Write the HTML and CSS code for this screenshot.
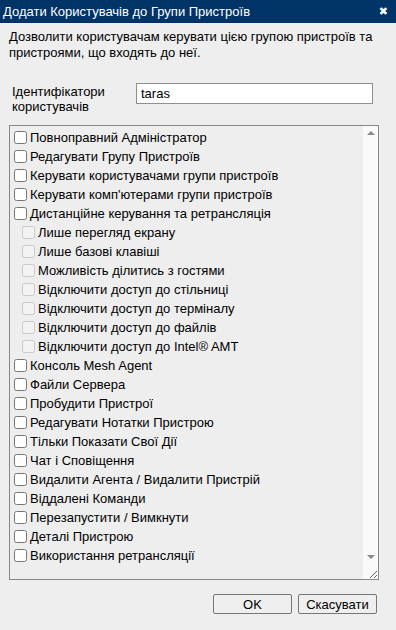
FILE: index.html
```html
<!DOCTYPE html>
<html lang="uk">
<head>
<meta charset="utf-8">
<link rel="stylesheet" href="styles.css">
</head>
<body>
<div class="dialog">
  <div class="titlebar">
    <span class="title">Додати Користувачів до Групи Пристроїв</span>
    <span class="close">&#x2716;</span>
  </div>
  <div class="content">
    <p class="desc">Дозволити користувачам керувати цією групою пристроїв та пристроями, що входять до неї.</p>
    <div class="idrow">
      <label class="idlabel" for="ids">Ідентифікатори користувачів</label>
      <input class="idinput" id="ids" type="text" value="taras">
    </div>
    <div class="listbox">
      <div class="rights">
        <label class="item"><input type="checkbox">Повноправний Адміністратор</label>
        <label class="item"><input type="checkbox">Редагувати Групу Пристроїв</label>
        <label class="item"><input type="checkbox">Керувати користувачами групи пристроїв</label>
        <label class="item"><input type="checkbox">Керувати комп'ютерами групи пристроїв</label>
        <label class="item"><input type="checkbox">Дистанційне керування та ретрансляція</label>
        <label class="item sub"><input type="checkbox" disabled>Лише перегляд екрану</label>
        <label class="item sub"><input type="checkbox" disabled>Лише базові клавіші</label>
        <label class="item sub"><input type="checkbox" disabled>Можливість ділитись з гостями</label>
        <label class="item sub"><input type="checkbox" disabled>Відключити доступ до стільниці</label>
        <label class="item sub"><input type="checkbox" disabled>Відключити доступ до терміналу</label>
        <label class="item sub"><input type="checkbox" disabled>Відключити доступ до файлів</label>
        <label class="item sub"><input type="checkbox" disabled>Відключити доступ до Intel® AMT</label>
        <label class="item"><input type="checkbox">Консоль Mesh Agent</label>
        <label class="item"><input type="checkbox">Файли Сервера</label>
        <label class="item"><input type="checkbox">Пробудити Пристрої</label>
        <label class="item"><input type="checkbox">Редагувати Нотатки Пристрою</label>
        <label class="item"><input type="checkbox">Тільки Показати Свої Дії</label>
        <label class="item"><input type="checkbox">Чат і Сповіщення</label>
        <label class="item"><input type="checkbox">Видалити Агента / Видалити Пристрій</label>
        <label class="item"><input type="checkbox">Віддалені Команди</label>
        <label class="item"><input type="checkbox">Перезапустити / Вимкнути</label>
        <label class="item"><input type="checkbox">Деталі Пристрою</label>
        <label class="item"><input type="checkbox">Використання ретрансляції</label>
      </div>
      <div class="scrollbar" aria-hidden="true">
        <span class="arrow up"></span>
        <span class="arrow down"></span>
      </div>
    </div>
    <div class="buttons">
      <button class="btn ok" type="button">OK</button>
      <button class="btn" type="button">Скасувати</button>
    </div>
  </div>
</div>
</body>
</html>
```
FILE: styles.css
```css
html, body {
  margin: 0;
  padding: 0;
  background: #eeeeee;
}
body {
  font-family: "Liberation Sans", Arial, sans-serif;
  font-size: 13px;
  color: #000;
  width: 396px;
  height: 630px;
  overflow: hidden;
}
.titlebar {
  background: #003366;
  color: #fff;
  height: 23px;
  display: flex;
  align-items: center;
  justify-content: space-between;
  padding: 0 8px 0 3px;
}
.title {
  font-size: 13px;
}
.close {
  font-size: 11px;
  font-family: "DejaVu Sans", sans-serif;
  font-weight: bold;
}
.content {
  padding: 6px 0 0 9px;
}
.desc {
  margin: 0;
  line-height: 16px;
  padding-right: 10px;
}
.idrow {
  display: flex;
  align-items: flex-start;
  margin-top: 22px;
  padding-left: 3px;
}
.idlabel {
  width: 124px;
  line-height: 15px;
  padding-top: 1px;
}
.idinput {
  width: 237px;
  height: 21px;
  box-sizing: border-box;
  margin: 0;
  padding: 1px 4px;
  border: 1px solid #8f8f8f;
  background: #fff;
  font-family: "Liberation Sans", Arial, sans-serif;
  font-size: 13px;
}
.listbox {
  position: relative;
  margin-top: 11px;
  width: 370px;
}
.rights {
  width: 370px;
  height: 455px;
  box-sizing: border-box;
  border: 1px solid #888;
  overflow: hidden;
  resize: vertical;
  padding-top: 2px;
  background:
    linear-gradient(#fafafa, #fafafa) right bottom / 15px 15px no-repeat,
    #eeeeee;
}
.scrollbar {
  position: absolute;
  top: 1px;
  right: 1px;
  width: 15px;
  height: 438px;
  background: #fafafa;
}
.arrow {
  position: absolute;
  left: 4px;
  width: 0;
  height: 0;
  border-left: 4px solid transparent;
  border-right: 4px solid transparent;
}
.arrow.up {
  top: 5px;
  border-bottom: 4px solid #8a8a8a;
}
.arrow.down {
  bottom: 5px;
  border-top: 4px solid #8a8a8a;
}
.item {
  display: flex;
  align-items: center;
  height: 19px;
  white-space: nowrap;
}
.item input {
  margin: 3px 3px 3px 4px;
  width: 13px;
  height: 13px;
}
.item.sub {
  padding-left: 8px;
}
.buttons {
  display: flex;
  justify-content: flex-end;
  gap: 6px;
  margin-top: 14px;
  padding-right: 19px;
}
.btn {
  width: 79px;
  height: 20px;
  margin: 0;
  padding: 0;
  font-family: "Liberation Sans", Arial, sans-serif;
  font-size: 13px;
  background: #efefef;
  border: 1px solid #767676;
  border-radius: 2px;
  color: #000;
}
```
